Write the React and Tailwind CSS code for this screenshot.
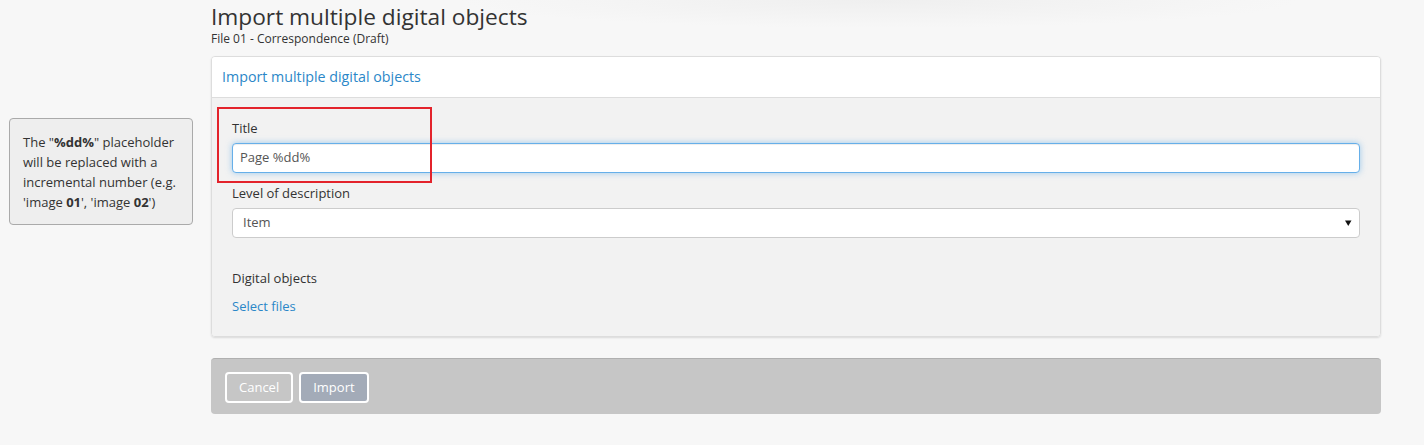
export default function App() {
  const font = { fontFamily: '"Open Sans", "Liberation Sans", sans-serif' };
  return (
    <div
      className="w-[1424px] h-[445px] bg-[#f7f7f7] bg-[radial-gradient(ellipse_420px_28px_at_880px_0px,#efefef,#f7f7f7)] text-[#333] flex"
      style={font}
    >
      {/* left tooltip column */}
      <div className="w-[211px] shrink-0 pl-[9px] pt-[118px]">
        <div className="w-[184px] rounded-[4px] border border-[#aaaaaa] bg-[#eeeeee] pl-[13px] pr-[8px] pt-[13px] pb-[12px] text-[13px] leading-[20px] text-[#333]">
          The "<b>%dd%</b>" placeholder will be replaced with a incremental number (e.g. 'image <b>01</b>', 'image <b>02</b>')
        </div>
      </div>

      {/* main column */}
      <div className="w-[1170px] shrink-0">
        <h1 className="mt-[3px] text-[22.7px] leading-[28px] font-normal text-[#333]">
          Import multiple digital objects
        </h1>
        <div className="text-[12px] leading-[16px] text-[#333]">File 01 - Correspondence (Draft)</div>

        <div className="mt-[9px] rounded-[4px] border border-[#dddddd] shadow-[0_1px_2px_rgba(0,0,0,0.12)] overflow-hidden">
          <div className="bg-white border-b border-[#dddddd] px-[10px] py-[10px] text-[14.25px] leading-[20px] text-[#2b87c8]">
            Import multiple digital objects
          </div>
          <div className="relative bg-[#f2f2f2] px-[20px] pt-[20px] pb-[20px]">
            <div className="absolute left-[5px] top-[9px] w-[215px] h-[76px] border-2 border-[#e3232b] pointer-events-none" />

            <label className="block text-[13px] leading-[20px] mb-[5px]">Title</label>
            <div className="h-[30px] rounded-[4px] border border-[#66afe9] bg-white shadow-[inset_0_1px_1px_rgba(0,0,0,0.075),0_0_6px_rgba(102,175,233,0.6)] pl-[7px] flex items-center text-[13px] text-[#555]">
              Page %dd%
            </div>

            <label className="block mt-[10px] text-[13px] leading-[20px] mb-[5px]">Level of description</label>
            <div className="h-[30px] rounded-[4px] border border-[#cccccc] bg-white pl-[10px] pr-[7px] flex items-center justify-between text-[13px] text-[#555]">
              <span>Item</span>
              <svg width="7" height="7" viewBox="0 0 7 7">
                <polygon points="0,0.5 6.5,0.5 3.25,6" fill="#111" />
              </svg>
            </div>

            <div className="mt-[30px] text-[13px] leading-[20px]">Digital objects</div>
            <div className="mt-[8px] text-[13px] leading-[20px] text-[#2b87c8]">Select files</div>
          </div>
        </div>

        <div className="mt-[21px] h-[56px] rounded-[4px] bg-[#c6c6c6] border-t border-[#b0b0b0] pl-[14px] pt-[13px] flex gap-[6px] items-start">
          <div className="h-[31px] px-[12px] rounded-[4px] border-2 border-white text-white text-[13px] flex items-center">
            Cancel
          </div>
          <div className="h-[31px] px-[12px] rounded-[4px] border-2 border-white bg-[#a3abb8] text-white text-[13px] flex items-center">
            Import
          </div>
        </div>
      </div>
    </div>
  );
}
